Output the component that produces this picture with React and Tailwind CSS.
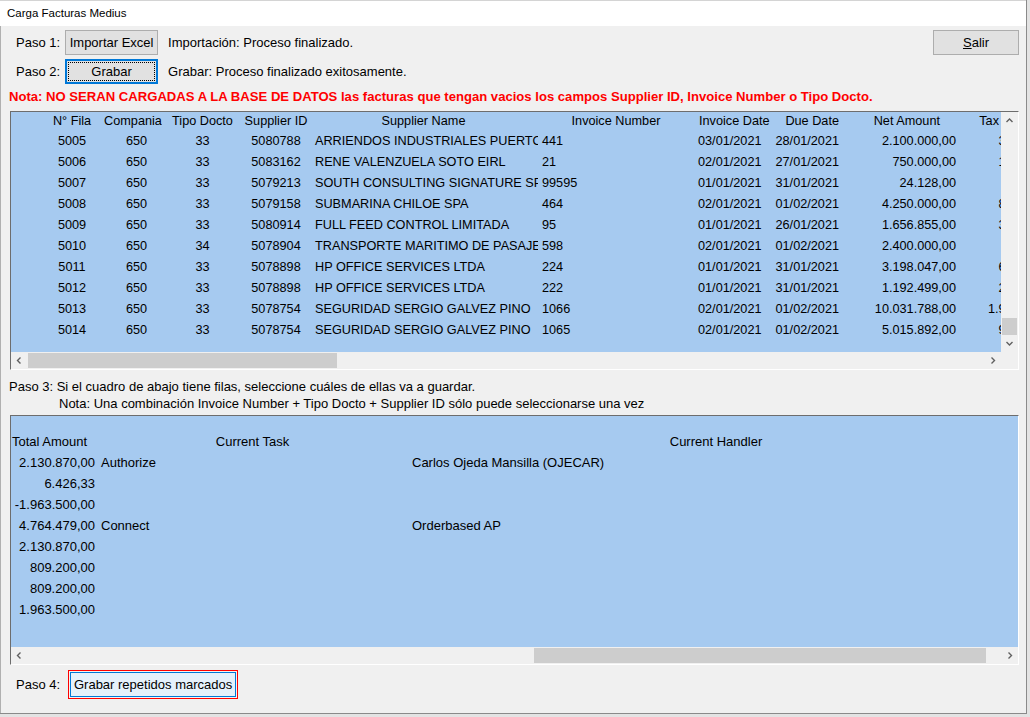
import React from "react";

const rows = [
  ["5005", "650", "33", "5080788", "ARRIENDOS INDUSTRIALES PUERTO MONTT S.A.", "441", "03/01/2021", "28/01/2021", "2.100.000,00", "399.000,00"],
  ["5006", "650", "33", "5083162", "RENE VALENZUELA SOTO EIRL", "21", "02/01/2021", "27/01/2021", "750.000,00", "142.500,00"],
  ["5007", "650", "33", "5079213", "SOUTH CONSULTING SIGNATURE SPA", "99595", "01/01/2021", "31/01/2021", "24.128,00", "4.584,32"],
  ["5008", "650", "33", "5079158", "SUBMARINA CHILOE SPA", "464", "02/01/2021", "01/02/2021", "4.250.000,00", "807.500,00"],
  ["5009", "650", "33", "5080914", "FULL FEED CONTROL LIMITADA", "95", "01/01/2021", "26/01/2021", "1.656.855,00", "314.802,45"],
  ["5010", "650", "34", "5078904", "TRANSPORTE MARITIMO DE PASAJEROS LTDA", "598", "02/01/2021", "01/02/2021", "2.400.000,00", "0,00"],
  ["5011", "650", "33", "5078898", "HP OFFICE SERVICES LTDA", "224", "01/01/2021", "31/01/2021", "3.198.047,00", "607.628,93"],
  ["5012", "650", "33", "5078898", "HP OFFICE SERVICES LTDA", "222", "01/01/2021", "31/01/2021", "1.192.499,00", "226.574,81"],
  ["5013", "650", "33", "5078754", "SEGURIDAD SERGIO GALVEZ PINO", "1066", "02/01/2021", "01/02/2021", "10.031.788,00", "1.906.039,72"],
  ["5014", "650", "33", "5078754", "SEGURIDAD SERGIO GALVEZ PINO", "1065", "02/01/2021", "01/02/2021", "5.015.892,00", "953.019,48"],
];

// columnas de la grilla de arriba (ancho, alineación del título y de los valores)
const cols = [
  { h: "N° Fila", w: "w-[64px]", hc: "justify-center", vc: "justify-center" },
  { h: "Compania", w: "w-[58px]", hc: "justify-center", vc: "justify-center pl-[7px]" },
  { h: "Tipo Docto", w: "w-[81px]", hc: "justify-center", vc: "justify-center" },
  { h: "Supplier ID", w: "w-[66px]", hc: "justify-center", vc: "justify-center" },
  { h: "Supplier Name", w: "w-[229px]", hc: "justify-center", vc: "pl-[6px]" },
  { h: "Invoice Number", w: "w-[156px]", hc: "justify-center", vc: "pl-[4px]" },
  { h: "Invoice Date", w: "w-[78px]", hc: "pl-[5px]", vc: "pl-[4px]" },
  { h: "Due Date", w: "w-[71px]", hc: "justify-end pr-[4px]", vc: "justify-end pr-[4px]" },
  { h: "Net Amount", w: "w-[117px]", hc: "justify-end pr-[20px]", vc: "justify-end pr-[4px]" },
  { h: "Tax", w: "w-[106px]", hc: "justify-end pr-[67px]", vc: "justify-end pr-[4px]" },
];

const repetidos = [
  ["2.130.870,00", "Authorize", "Carlos Ojeda Mansilla (OJECAR)"],
  ["6.426,33", "", ""],
  ["-1.963.500,00", "", ""],
  ["4.764.479,00", "Connect", "Orderbased AP"],
  ["2.130.870,00", "", ""],
  ["809.200,00", "", ""],
  ["809.200,00", "", ""],
  ["1.963.500,00", "", ""],
];

function Chev({ dir }) {
  const d = {
    up: "M1.5 6 L4.5 3 L7.5 6",
    down: "M1.5 3 L4.5 6 L7.5 3",
    left: "M5.5 1.5 L2.5 4.5 L5.5 7.5",
    right: "M3.5 1.5 L6.5 4.5 L3.5 7.5",
  }[dir];
  return (
    <svg width="9" height="9" viewBox="0 0 9 9">
      <path d={d} fill="none" stroke="#606060" strokeWidth="1.4" />
    </svg>
  );
}

function HScroll({ thumb }) {
  return (
    <div className="flex-1 h-[17px] bg-[#f0f0f0] flex items-center">
      <div className="w-[17px] h-[17px] flex items-center justify-center shrink-0">
        <Chev dir="left" />
      </div>
      {thumb}
      <div className="flex-1" />
      <div className="w-[17px] h-[17px] flex items-center justify-center shrink-0">
        <Chev dir="right" />
      </div>
    </div>
  );
}

export default function App() {
  return (
    <div className="w-[1030px] h-[717px] bg-[#e3e3e3] font-['Liberation_Sans',Arial,sans-serif] text-black overflow-hidden">
      <div className="w-[1027px] h-[714px] flex flex-col border-r border-b border-[#8a8a8a]">
        {/* barra de título */}
        <div className="h-[26px] bg-white border-t border-[#d4d4d4] flex items-center pl-[7px] text-[11.5px] shrink-0">
          Carga Facturas Medius
        </div>

        <div className="flex-1 bg-[#f0f0f0] flex flex-col text-[13px] border-l border-[#b0b0b0]">
          {/* paso 1 */}
          <div className="flex items-center h-[25px] mt-[4px] pl-[15px] pr-[7px]">
            <span>Paso 1:</span>
            <button className="ml-[5px] w-[93px] h-[25px] bg-[#e1e1e1] border border-[#adadad]">Importar Excel</button>
            <span className="ml-[10px]">Importación: Proceso finalizado.</span>
            <button className="ml-auto w-[86px] h-[25px] bg-[#e1e1e1] border border-[#adadad]">
              <span className="underline">S</span>alir
            </button>
          </div>

          {/* paso 2 */}
          <div className="flex items-center h-[25px] mt-[4px] pl-[15px]">
            <span>Paso 2:</span>
            <button className="ml-[5px] w-[93px] h-[25px] bg-[#e1e1e1] border-2 border-[#0078d7] p-[1px]">
              <span className="flex items-center justify-center w-full h-full border border-dotted border-black">Grabar</span>
            </button>
            <span className="ml-[10px]">Grabar: Proceso finalizado exitosamente.</span>
          </div>

          <div className="h-[15px] mt-[5px] pl-[8px] flex items-center font-bold text-[13.1px] text-[#ff0000] whitespace-nowrap">
            Nota: NO SERAN CARGADAS A LA BASE DE DATOS las facturas que tengan vacios los campos Supplier ID, Invoice Number o Tipo Docto.
          </div>

          {/* grilla facturas */}
          <div className="ml-[9px] mt-[7px] w-[1009px] h-[259px] border-l border-t border-[#6d6d6d] border-r border-b border-r-white border-b-white flex flex-col text-[12.7px] shrink-0">
            <div className="flex h-[240px]">
              <div className="w-[990px] h-[240px] pt-[1px] bg-[#a6caf0] overflow-hidden">
                <div className="flex h-[18px]">
                  <div className="w-[29px] shrink-0" />
                  {cols.map((c) => (
                    <div key={c.h} className={`${c.w} ${c.hc} shrink-0 flex items-center whitespace-nowrap overflow-hidden`}>
                      {c.h}
                    </div>
                  ))}
                </div>
                {rows.map((r) => (
                  <div key={r[0]} className="flex h-[21px]">
                    <div className="w-[29px] shrink-0" />
                    {cols.map((c, i) => (
                      <div key={c.h} className={`${c.w} ${c.vc} shrink-0 flex items-center whitespace-nowrap overflow-hidden`}>
                        {r[i]}
                      </div>
                    ))}
                  </div>
                ))}
              </div>
              <div className="w-[17px] h-[240px] bg-[#f0f0f0] flex flex-col items-center">
                <div className="h-[17px] w-[17px] flex items-center justify-center">
                  <Chev dir="up" />
                </div>
                <div className="h-[189px]" />
                <div className="h-[17px] w-[15px] bg-[#cdcdcd]" />
                <div className="flex-1" />
                <div className="h-[17px] w-[17px] flex items-center justify-center">
                  <Chev dir="down" />
                </div>
              </div>
            </div>
            <div className="flex h-[17px]">
              <HScroll thumb={<div className="w-[309px] h-[15px] bg-[#cdcdcd]" />} />
              <div className="w-[17px] h-[17px] bg-[#f0f0f0]" />
            </div>
          </div>

          {/* paso 3 */}
          <div className="mt-[8px] pl-[8px] leading-[17px]">
            <div>Paso 3: Si el cuadro de abajo tiene filas, seleccione cuáles de ellas va a guardar.</div>
            <div className="pl-[50px]">Nota: Una combinación Invoice Number + Tipo Docto + Supplier ID sólo puede seleccionarse una vez</div>
          </div>

          {/* grilla repetidos */}
          <div className="ml-[9px] mt-[3px] w-[1009px] h-[250px] border-l border-t border-[#6d6d6d] border-r border-b border-r-white border-b-white flex flex-col shrink-0">
            <div className="h-[231px] bg-[#a6caf0] overflow-hidden">
              <div className="h-[16px]" />
              <div className="flex h-[20px]">
                <div className="w-[86px] pl-[1px] flex items-center shrink-0">Total Amount</div>
                <div className="w-[311px] flex items-center justify-center shrink-0">Current Task</div>
                <div className="w-[616px] flex items-center justify-center shrink-0">Current Handler</div>
              </div>
              {repetidos.map((r, i) => (
                <div key={i} className="flex h-[21px]">
                  <div className="w-[86px] pr-[2px] flex items-center justify-end shrink-0 whitespace-nowrap">{r[0]}</div>
                  <div className="w-[311px] pl-[4px] flex items-center shrink-0">{r[1]}</div>
                  <div className="w-[616px] pl-[4px] flex items-center shrink-0">{r[2]}</div>
                </div>
              ))}
            </div>
            <div className="flex h-[17px]">
              <HScroll
                thumb={
                  <>
                    <div className="w-[506px]" />
                    <div className="w-[452px] h-[15px] bg-[#cdcdcd]" />
                  </>
                }
              />
            </div>
          </div>

          {/* paso 4 */}
          <div className="flex items-center h-[29px] mt-[5px] pl-[15px]">
            <span>Paso 4:</span>
            <div className="ml-[8px] w-[170px] h-[29px] border border-[#ff0000] p-[1px] bg-[#f4f4f4]">
              <button className="w-full h-full border border-[#0078d7] bg-[#e5f1fb] flex items-center justify-center">
                Grabar repetidos marcados
              </button>
            </div>
          </div>
        </div>
      </div>
    </div>
  );
}
